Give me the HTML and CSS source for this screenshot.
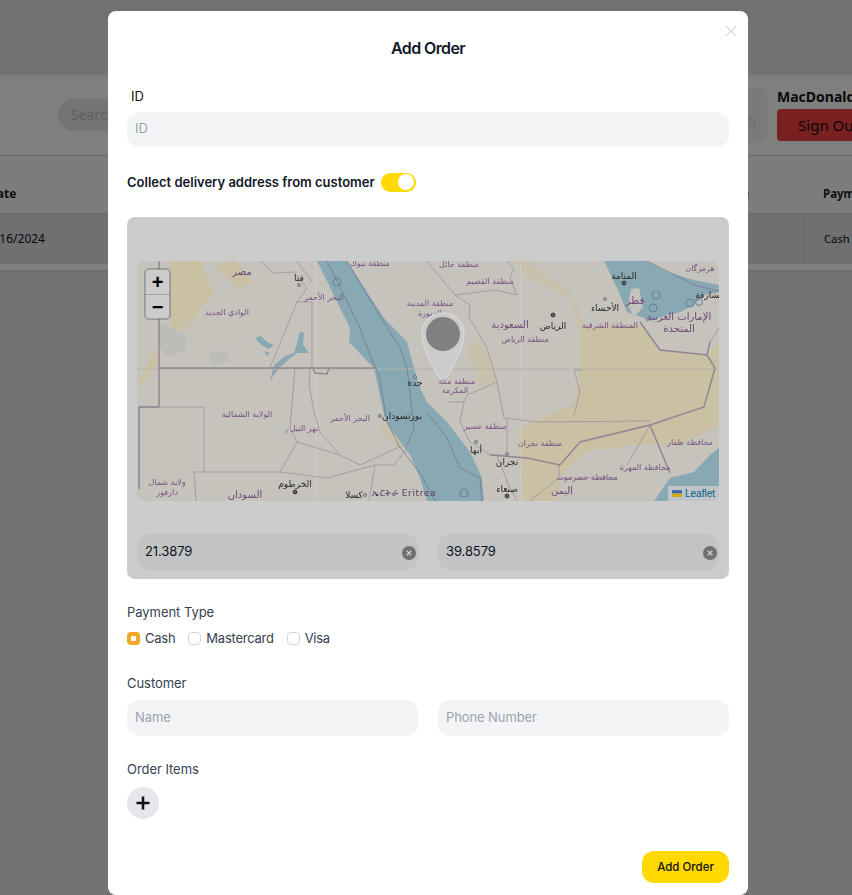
FILE: index.html
```html
<!DOCTYPE html>
<html lang="en">
<head>
<meta charset="utf-8">
<title>Add Order</title>
<link rel="stylesheet" href="styles.css">
</head>
<body>
<div class="app">
  <header class="topbar">
    <div class="search">Search</div>
    <div class="account">
      <div class="avatar">
        <svg class="avatar-icon" viewBox="0 0 24 24"><path d="M2 18c1-5 4-8 6-8s5 3 6 8c-3 2-9 2-12 0Z"/></svg>
      </div>
      <div class="account-text">
        <div class="account-name">MacDonald's</div>
        <button class="signout">Sign Out</button>
      </div>
    </div>
  </header>
  <section class="table">
    <div class="t-row t-head">
      <div class="c-date">Date</div>
      <div class="c-mid">Type</div>
      <div class="c-pay">Payment</div>
    </div>
    <div class="t-row t-body">
      <div class="c-date">7/16/2024</div>
      <div class="c-mid"></div>
      <div class="c-pay">Cash</div>
    </div>
  </section>
</div>

<div class="overlay">
  <div class="modal">
    <button class="close" aria-label="Close">
      <svg viewBox="0 0 14 14" class="close-icon"><path d="M1.5 1.5l11 11M12.5 1.5l-11 11"/></svg>
    </button>
    <h2 class="title">Add Order</h2>

    <label class="id-label">ID</label>
    <div class="field field-id">ID</div>

    <div class="collect">
      <span class="collect-text">Collect delivery address from customer</span>
      <span class="toggle"><span class="knob"></span></span>
    </div>

    <div class="panel">
      <div class="map">
        <svg class="map-svg" viewBox="0 0 582 240">
          <rect class="land" width="582" height="240"/>
          <path class="desert" d="M33 0L63 0L77 31L47 71L33 67ZM78 4L97 0L117 21L100 27ZM0 121L20 87L20 104L7 121Z"/>
          <path class="desert" d="M443 67L503 64L523 89L570 94L582 81L582 165L540 185L505 183L450 190L423 215L420 240L387 240L380 170L400 158L437 144L443 107Z"/>
          <path class="desert-soft" d="M378 0L392 0L432 30L450 67L443 72L430 36L392 18ZM330 90L345 130L360 120L352 90L338 75ZM240 165L262 190L270 175L250 160Z"/>
          <path class="scrub" d="M22 60L50 75L48 90L30 95L22 85ZM72 92L90 90L92 100L75 105Z"/>
          <path class="water" d="M180 0L213 67L212 81L237 107L247 154L253 167L273 194L283 217L290 240L347 240L345 217L333 191L310 161L290 141L283 127L277 107L270 81L247 57L210 0Z"/>
          <path class="water" d="M467 0L480 27L490 51L507 57L510 61L520 57L543 51L557 44L567 34L582 31L582 24L557 19L530 11L510 0Z"/>
          <path class="land" d="M494 28L502 27L506 46L497 56L491 44Z"/>
          <path class="water" d="M517 240L533 217L557 211L573 194L582 187L582 240Z"/>
          <path class="water" d="M118 77L124 75L130 81L137 84L132 88L124 84ZM127 90L133 92L130 95ZM137 104L148 95L157 92L160 82L163 71L167 72L166 84L172 92L160 92L150 100L143 106L137 114L133 120Z"/>
          <path class="water" d="M148 170L152 168L150 172L148 173Z"/>

          <path class="seam" d="M179 0V240M384 0V240"/>
          <path class="seam-h" d="M0 108H582"/>

          <path class="admin" d="M123 0L137 12L157 11L170 27L160 41L133 107M160 41H175V107M160 0L175 21"/>
          <path class="admin" d="M67 146V211M57 211L59 240M57 211H143L160 181L153 167L158 107M160 181L203 194L223 204L267 184M173 107L172 124L177 151L183 171L203 194M143 211L190 217L238 204L232 240M238 204H257L273 184M2 146H67"/>
          <path class="admin" d="M318 34L333 44L332 56L350 87L360 121L367 157L400 161L513 160M370 0L377 7L373 17L380 34L358 29L318 34M290 0L318 34M310 141H327L330 134L360 121M327 141L323 161L333 181L353 194H370V157M360 194L372 225L380 240M490 204L513 164M422 204V217H480M422 217L393 240"/>
          <path class="admin" d="M437 154L443 131L437 109L445 109M573 81L582 67"/>
          <path class="sea-border" d="M190 0L207 34L223 67L233 94L242 114L250 161L262 185L285 215L298 240M210 0L230 34L263 87L270 107L277 167L270 184M290 151L310 177L323 207L343 217L345 240M510 0L560 25L582 30"/>
          <path class="border-strong" d="M22 0V146M2 146H22M2 146V228M22 107H238M176 107L178 112L190 113L192 107M353 194L390 197L423 204L443 181L513 164L567 146L578 107L570 94L523 89L503 61M513 164L533 212M570 94L573 81"/>
          <circle class="ring" cx="200" cy="21" r="4"/>
          <circle class="ring" cx="519" cy="34" r="4"/>
          <circle class="ring" cx="516" cy="47" r="4"/>
          <circle class="ring" cx="553" cy="42" r="4"/>
          <circle class="ring" cx="562" cy="41" r="3.5"/>
          <circle class="ring" cx="327" cy="232" r="4"/>
          <circle class="dot" cx="416" cy="54" r="2"/>
          <circle class="dot" cx="487" cy="22" r="2"/>
          <circle class="dot" cx="158" cy="231" r="2"/>
          <circle class="dot" cx="370" cy="235" r="2"/>
          <circle class="dot-o" cx="162" cy="24" r="1.5"/>
          <circle class="dot-o" cx="278" cy="116" r="1.5"/>
          <circle class="dot-o" cx="243" cy="155" r="1.5"/>
          <circle class="dot-o" cx="339" cy="181" r="1.5"/>
          <circle class="dot-o" cx="370" cy="193" r="1.5"/>
          <circle class="dot-o" cx="468" cy="38" r="1.5"/>
          <circle class="dot-o" cx="228" cy="234" r="1.5"/>

          <text class="lb lb-b" x="105" y="14">مصر</text>
          <text class="lb lb-d" x="162" y="20">قنا</text>
          <text class="lb lb-m" x="187" y="39">البحر الأحمر</text>
          <text class="lb lb-m" x="90" y="54">الوادي الجديد</text>
          <text class="lb lb-m" x="233" y="5">منطقة تبوك</text>
          <text class="lb lb-m" x="293" y="45">منطقة المدينة</text>
          <text class="lb lb-m" x="293" y="55">المنورة</text>
          <text class="lb lb-m" x="110" y="156">الولاية الشمالية</text>
          <text class="lb lb-m" x="213" y="160">البحر الأحمر</text>
          <text class="lb lb-d" x="265" y="158">بورتسودان</text>
          <text class="lb lb-d" x="278" y="125">جدة</text>
          <text class="lb lb-m" x="167" y="170">نهر النيل</text>
          <text class="lb lb-m" x="30" y="224">ولاية شمال</text>
          <text class="lb lb-m" x="30" y="234">دارفور</text>
          <text class="lb lb-d" x="158" y="226">الخرطوم</text>
          <text class="lb lb-b" x="108" y="237">السودان</text>
          <text class="lb lb-d" x="217" y="237">كسلا</text>
          <text class="lb lb-e" x="267" y="235">ኤርትራ Eritrea</text>
          <text class="lb lb-m" x="322" y="6">منطقة حائل</text>
          <text class="lb lb-m" x="353" y="23">منطقة القصيم</text>
          <text class="lb lb-b" x="373" y="67">السعودية</text>
          <text class="lb lb-d" x="416" y="68">الرياض</text>
          <text class="lb lb-m" x="388" y="81">منطقة الرياض</text>
          <text class="lb lb-d" x="468" y="50">الأحساء</text>
          <text class="lb lb-m" x="473" y="67">المنطقة الشرقية</text>
          <text class="lb lb-d" x="487" y="18">المنامة</text>
          <text class="lb lb-b" x="498" y="43">قطر</text>
          <text class="lb lb-b" x="542" y="59">الإمارات العربية</text>
          <text class="lb lb-b" x="542" y="71">المتحدة</text>
          <text class="lb lb-d" x="573" y="37">الشارقة</text>
          <text class="lb lb-m" x="563" y="10">هرمزگان</text>
          <text class="lb lb-m" x="320" y="123">منطقة مكة</text>
          <text class="lb lb-m" x="318" y="132">المكرمة</text>
          <text class="lb lb-m" x="348" y="168">منطقة عسير</text>
          <text class="lb lb-d" x="339" y="192">أبها</text>
          <text class="lb lb-d" x="370" y="204">نجران</text>
          <text class="lb lb-m" x="403" y="185">منطقة نجران</text>
          <text class="lb lb-d" x="370" y="231">صنعاء</text>
          <text class="lb lb-b" x="425" y="233">اليمن</text>
          <text class="lb lb-m" x="508" y="209">محافظة المهرة</text>
          <text class="lb lb-m" x="450" y="219">محافظة حضرموت</text>
          <text class="lb lb-m" x="553" y="184">محافظة ظفار</text>
        </svg>
        <div class="zoom">
          <button class="zoom-btn">+</button>
          <button class="zoom-btn">−</button>
        </div>
        <div class="attribution">
          <svg class="flag" viewBox="0 0 12 8"><rect width="12" height="4" class="flag-b"/><rect y="4" width="12" height="4" class="flag-y"/></svg>
          <span class="leaflet">Leaflet</span>
        </div>
      </div>
      <div class="coords">
        <div class="coord"><span>21.3879</span><span class="clear"><svg viewBox="0 0 14 14"><path d="M4.7 4.7l4.6 4.6M9.3 4.7l-4.6 4.6"/></svg></span></div>
        <div class="coord"><span>39.8579</span><span class="clear"><svg viewBox="0 0 14 14"><path d="M4.7 4.7l4.6 4.6M9.3 4.7l-4.6 4.6"/></svg></span></div>
      </div>
      <div class="dim"></div>
      <svg class="pin" viewBox="0 0 44 68">
        <path class="pin-halo" d="M22 67C17 67 13 56 8 46C4 38 1 30 1 22a21 21 0 0 1 42 0C43 30 40 38 36 46C31 56 27 67 22 67Z"/>
        <circle class="pin-dot" cx="22" cy="22" r="17"/>
      </svg>
    </div>

    <div class="section-label payment-label">Payment Type</div>
    <div class="options">
      <span class="opt"><span class="box box-on"></span>Cash</span>
      <span class="opt"><span class="box"></span>Mastercard</span>
      <span class="opt"><span class="box"></span>Visa</span>
    </div>

    <div class="section-label customer-label">Customer</div>
    <div class="two">
      <div class="field">Name</div>
      <div class="field">Phone Number</div>
    </div>

    <div class="section-label items-label">Order Items</div>
    <button class="add-item" aria-label="Add item">
      <svg viewBox="0 0 16 16"><path d="M8 1.5v13M1.5 8h13"/></svg>
    </button>

    <div class="footer"><button class="submit">Add Order</button></div>
  </div>
</div>
</body>
</html>
```
FILE: styles.css
```css
* { box-sizing: border-box; }
html, body { margin: 0; height: 100%; overflow: hidden; }
body { background: #e5e5e5; font-family: "Noto Sans", sans-serif; }
button { font: inherit; border: 0; padding: 0; }

/* page behind the dialog */
.app { padding-top: 75px; width: 880px; }
.topbar { height: 81px; background: #fff; border-bottom: 1px solid #d8d8d8; display: flex; align-items: center; padding-left: 58px; justify-content: space-between; }
.search { width: 260px; height: 32px; border-radius: 16px; background: #e8e8e8; color: #c0c0c0; font-size: 14px; line-height: 32px; padding-left: 13px; margin-top: -1px; }
.account { display: flex; gap: 10px; align-items: center; }
.avatar { width: 60px; height: 54px; border-radius: 8px; background: #f3f4f6; display: flex; justify-content: flex-end; align-items: center; padding-right: 3px; }
.avatar-icon { width: 20px; height: 20px; margin-top: 10px; fill: none; stroke: #dcdcdc; stroke-width: 2; }
.account-name { font-size: 14px; font-weight: 700; color: #111; line-height: 20px; margin-top: -2px; }
.signout { display: block; width: 103px; height: 32px; background: #f24040; border-radius: 4px; color: #111; font-size: 15px; margin-top: 2px; }
.table { padding-bottom: 6px; background: #fff; box-shadow: 0 2px 4px rgba(0,0,0,.05); }
.t-row { display: flex; margin-left: -12px; }
.t-head { height: 58px; padding-top: 18px; background: #f8f8f8; border-bottom: 1px solid #d0d0d0; font-size: 12px; font-weight: 700; color: #222; align-items: center; }
.t-body { height: 50px; padding-bottom: 2px; background: #dfe0e2; font-size: 12px; color: #111; align-items: center; }
.c-date { width: 84px; }
.c-mid { width: 731px; text-align: right; padding-right: 54px; }
.t-head .c-pay { margin-top: -18px; padding-top: 18px; padding-left: 19px; font-size: 11.5px; border-left-color: transparent; }
.c-pay { padding-left: 20px; border-left: 1px solid #d0d0d0; height: 100%; display: flex; align-items: center; white-space: nowrap; font-size: 11.2px; }

/* dialog */
.overlay { position: absolute; inset: 0; background: rgba(0,0,0,.5); display: flex; justify-content: center; padding: 11px 0 0 4px; overflow: hidden; }
.modal { position: relative; width: 640px; height: 884px; flex: none; background: #fff; border-radius: 8px; padding: 0 19px; font-family: Inter, sans-serif; color: #111827; }
.close { position: absolute; top: 14px; right: 11px; width: 12px; height: 12px; background: none; }
.close-icon { display: block; width: 12px; height: 12px; fill: none; stroke: #d8dbe0; stroke-width: 1.5; }
.title { margin: 0; padding-top: 27px; height: 58px; text-align: center; font-size: 16px; line-height: 20px; font-weight: 600; letter-spacing: -.6px; color: #111827; }
.id-label { display: block; margin: 18px 0 0 4px; height: 25px; font-size: 13px; line-height: 18px; color: #111; }
.field { height: 36px; border-radius: 12px; background: #f3f4f6; color: #9ca3af; font-size: 13px; letter-spacing: -.1px; line-height: 35px; padding-left: 8px; }
.field-id { height: 35px; line-height: 33px; }
.collect { display: flex; align-items: center; gap: 6px; margin-top: 25px; height: 20px; }
.collect-text { font-size: 13px; font-weight: 600; color: #111827; }
.toggle { position: relative; display: block; width: 35px; height: 19px; border-radius: 10px; background: #ffd900; }
.knob { position: absolute; top: 1.5px; right: 1.5px; width: 16px; height: 16px; border-radius: 50%; background: #fff; }

.panel { position: relative; height: 362px; margin-top: 25px; padding: 44px 10px 0; border-radius: 8px; background: #fff; overflow: hidden; }
.dim { position: absolute; inset: 0; background: rgba(0,0,0,.2); }
.map { position: relative; height: 240px; border-radius: 8px; overflow: hidden; }
.map-svg { display: block; width: 582px; height: 240px; filter: blur(.35px); }
.land { fill: #f8f4ed; }
.desert { fill: #fdf2cf; }
.desert-soft { fill: #fbf2d8; }
.scrub { fill: #ecebe6; }
.water { fill: #aad2e0; }
.seam { fill: none; stroke: #fffefa; stroke-width: 1; }
.seam-h { fill: none; stroke: #e2dfd9; stroke-width: 1; }
.admin { fill: none; stroke: #c9bcc9; stroke-width: .9; }
.sea-border { fill: none; stroke: #8f90ab; stroke-width: 1; opacity: .7; }
.border-strong { fill: none; stroke: #b8a6b8; stroke-width: 1.5; }
.ring { fill: none; stroke: #7f9fb8; stroke-width: 1; }
.dot { fill: #777; stroke: #333; stroke-width: .8; }
.dot-o { fill: #f2efe9; stroke: #666; stroke-width: .7; }
.lb { font-family: "DejaVu Sans", "Noto Sans", sans-serif; text-anchor: middle; }
.lb-m { font-size: 8px; fill: #96699e; }
.lb-b { font-size: 10px; fill: #885a90; }
.lb-d { font-size: 9px; fill: #333; }
.lb-e { font-size: 9px; fill: #6a4a76; letter-spacing: .6px; }

.zoom { position: absolute; top: 8px; left: 8px; width: 25px; border-radius: 4px; outline: 2px solid rgba(0,0,0,.2); outline-offset: -1px; overflow: hidden; background: #fff; }
.zoom-btn { display: block; width: 25px; height: 25px; background: #fff; color: #000; font-family: "Liberation Sans", sans-serif; font-size: 20px; font-weight: 700; line-height: 24px; text-align: center; }
.zoom-btn + .zoom-btn { border-top: 1px solid #ccc; }
.attribution { position: absolute; right: 0; bottom: 0; height: 15px; padding: 0 4px; display: flex; align-items: center; gap: 3px; background: rgba(255,255,255,.8); font-family: "Liberation Sans", sans-serif; font-size: 10px; }
.flag { width: 10px; height: 7px; display: block; }
.flag-b { fill: #4c7be1; }
.flag-y { fill: #ffd500; }
.leaflet { color: #0078a8; }

.coords { display: flex; gap: 20px; margin-top: 33px; }
.coord { flex: 1; height: 36px; border-radius: 12px; background: #f3f4f6; display: flex; align-items: center; justify-content: space-between; padding: 0 2px 0 8px; font-size: 13px; letter-spacing: -.1px; color: #111827; }
.coord span:first-child { margin-top: -3px; }
.clear { width: 14px; height: 14px; border-radius: 50%; background: #8a8c90; margin-top: 2px; }
.clear svg { display: block; width: 14px; height: 14px; fill: none; stroke: #fff; stroke-width: 1.4; }
.pin { position: absolute; left: 294px; top: 95px; width: 44px; height: 68px; }
.pin-halo { fill: #cbcbcb; stroke: #d6d6d6; stroke-width: 1.5; }
.pin-dot { fill: #808080; }

.section-label { font-size: 13px; line-height: 16px; letter-spacing: -.05px; color: #374151; }
.payment-label { margin-top: 25px; }
.options { display: flex; gap: 13px; margin-top: 10px; height: 16px; align-items: center; font-size: 13px; letter-spacing: -.25px; color: #374151; }
.opt { display: flex; align-items: center; gap: 5px; }
.box { width: 13px; height: 13px; border: 1px solid #d1d5db; border-radius: 4px; background: #fff; }
.box-on { border: 4px solid #f5a623; }
.customer-label { margin-top: 29px; }
.two { display: flex; gap: 20px; margin-top: 9px; }
.two .field { flex: 1; }
.items-label { margin-top: 25px; }
.add-item { display: block; width: 32px; height: 32px; margin-top: 10px; border-radius: 50%; background: #e5e7eb; }
.add-item svg { display: block; width: 16px; height: 16px; margin: 8px; fill: none; stroke: #111; stroke-width: 2.6; }
.footer { display: flex; justify-content: flex-end; margin-top: 32px; }
.submit { width: 87px; height: 32px; border-radius: 12px; background: #ffd900; font-family: Inter, sans-serif; font-size: 11.5px; font-weight: 500; color: #111; }
```
